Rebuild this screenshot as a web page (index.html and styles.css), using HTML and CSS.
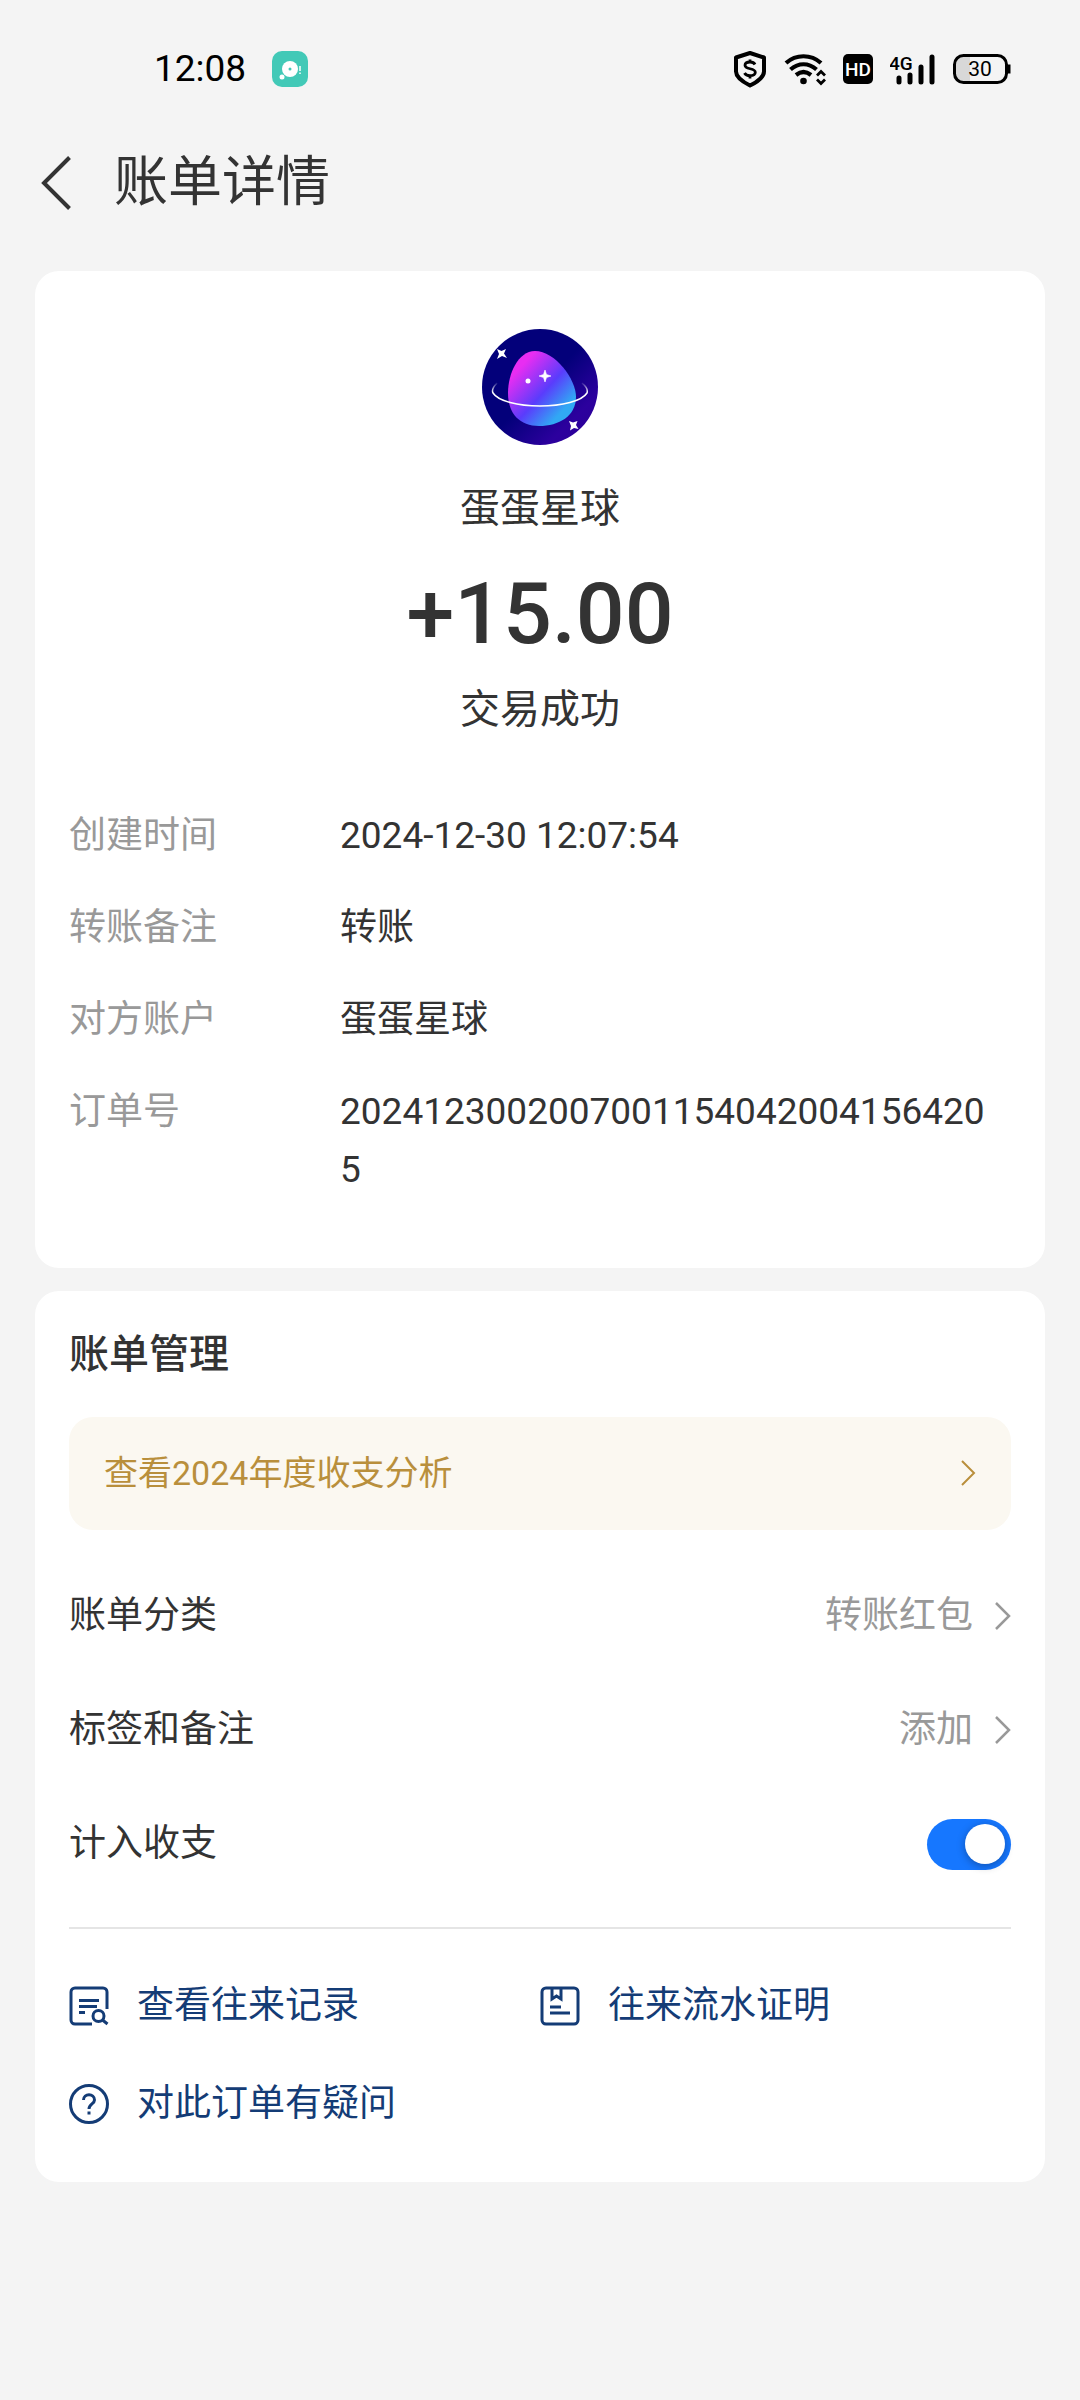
FILE: index.html
```html
<!DOCTYPE html>
<html lang="zh-CN">
<head>
    <meta charset="UTF-8">
    <meta name="viewport" content="width=device-width, initial-scale=1.0">
    <title>账单详情</title>
    <link rel="stylesheet" href="styles.css">
</head>
<body>
    <div class="status-bar">
        <span class="time">12:08</span>
        <svg class="app-badge" width="36" height="36" viewBox="0 0 36 36" aria-hidden="true">
            <rect width="36" height="36" rx="10" fill="#42c9b7"/>
            <circle cx="18" cy="18" r="8" fill="#fff"/>
            <circle cx="10" cy="26" r="2.5" fill="#fff"/>
            <circle cx="18" cy="18" r="1.5" fill="#42c9b7"/>
            <path d="M28 15v5M28 21.500v1.500" stroke="#fff" stroke-width="1.500"/>
        </svg>
        <div class="status-icons">
            <svg width="34" height="38" viewBox="0 0 34 38" aria-hidden="true">
                <path d="M17 3l14 4.500v14c0 6-6 10-14 14-8-4-14-8-14-14v-14z" fill="none" stroke="#000" stroke-width="4" stroke-linejoin="round"/>
                <path d="M22 14.500c-1-2-3-2.500-5-2.500-3 0-5 1.200-5 3.300 0 4.700 10.300 2.200 10.300 7 0 2.200-2.300 3.400-5.300 3.400-2.500 0-4.500-.8-5.500-2.700M17 9.500v3M17 25.500v3" fill="none" stroke="#000" stroke-width="2.800"/>
            </svg>
            <svg width="42" height="34" viewBox="0 0 42 34" aria-hidden="true">
                <path d="M2 11c10-9 25-9 35 0M6.500 17.500c8-7 18-7 26 0M12 23c5-4 10-4 15 0" fill="none" stroke="#000" stroke-width="4.200"/>
                <circle cx="19.500" cy="29" r="3.300"/>
                <path d="M33 23.500l4-4 4 4M33 27.500l4 4 4-4" fill="none" stroke="#000" stroke-width="2.800"/>
            </svg>
            <svg width="30" height="30" viewBox="0 0 30 30" aria-label="HD">
                <rect width="30" height="30" rx="5"/>
                <text class="hd" x="15" y="22" text-anchor="middle">HD</text>
            </svg>
            <svg width="46" height="32" viewBox="0 0 46 32" aria-label="4G">
                <text class="net" x="-1" y="17">4G</text>
                <path d="M9 25v4M20 22v7M31 14v15M42 4v25" stroke="#000" stroke-width="5" stroke-linecap="round"/>
            </svg>
            <svg width="58" height="32" viewBox="0 0 58 32" aria-label="30%">
                <path d="M10 2h7v28h-7a8 8 0 0 1-8-8V10a8 8 0 0 1 8-8z" fill="#d8d8d8"/>
                <rect x="1.500" y="2.500" width="52" height="27" rx="9" fill="none" stroke="#000" stroke-width="3"/>
                <path d="M56 11.500v9" stroke="#000" stroke-width="3"/>
                <text class="battery" x="27" y="23" text-anchor="middle">30</text>
            </svg>
        </div>
    </div>

    <header class="header">
        <button class="back" type="button" aria-label="返回">
            <svg width="32" height="54" viewBox="0 0 32 54" aria-hidden="true">
                <path d="M29.500 1.500L4 27l25.500 25.500" fill="none" stroke="#333" stroke-width="4"/>
            </svg>
        </button>
        <h1>账单详情</h1>
    </header>

    <main>
        <section class="card summary">
            <svg class="avatar" width="116" height="116" viewBox="0 0 116 116" role="img" aria-label="蛋蛋星球">
                <defs>
                    <linearGradient id="sky" x1="0" y1="0" x2="1" y2="1">
                        <stop offset=".5" stop-color="#03007a"/>
                        <stop offset=".78" stop-color="#2c009e"/>
                        <stop offset="1" stop-color="#2a0094"/>
                    </linearGradient>
                    <linearGradient id="egg" x1=".1" y1=".15" x2=".85" y2=".9">
                        <stop offset=".1" stop-color="#e82df2"/>
                        <stop offset=".55" stop-color="#5a3cfc"/>
                        <stop offset=".9" stop-color="#31a8f4"/>
                    </linearGradient>
                    <linearGradient id="ring" x1="0" y1="0" x2="0" y2="1">
                        <stop offset="0" stop-color="#fff" stop-opacity=".1"/>
                        <stop offset=".4" stop-color="#fff"/>
                    </linearGradient>
                </defs>
                <circle cx="58" cy="58" r="58" fill="url(#sky)"/>
                <path d="M53 22c20 0 41 28 41 46 0 19-17 29-37 29-19 0-31-12-31-33 0-19 10-42 27-42z" fill="url(#egg)"/>
                <path d="M15 54c-5 5-5 8-4 10 5 8 25 13 47 13s42-5 47-13c1-3 0-6-5-10" fill="none" stroke="url(#ring)" stroke-width="1.500"/>
                <circle cx="46" cy="52" r="2.500" fill="#fff"/>
                <path d="M63 41l1.500 4.500L69 47l-4.500 1.500L63 53l-1.500-4.500L57 47l4.500-1.500z" fill="#fff" stroke="#fff" stroke-width=".6"/>
                <path d="M15 20l4.500 2 4.500-2-2 4.500 3 4.500-5-2-5 3 2-5z" fill="#fff"/>
                <path d="M87 92l4 1.500 4.500-1.500-1.500 4 2.500 4-4.500-1-4 2.500 1-4.500z" fill="#fff"/>
            </svg>
            <p class="name">蛋蛋星球</p>
            <p class="amount">+15.00</p>
            <p class="state">交易成功</p>
            <dl class="details">
                <dt>创建时间</dt>
                <dd>2024-12-30 12:07:54</dd>
                <dt>转账备注</dt>
                <dd>转账</dd>
                <dt>对方账户</dt>
                <dd>蛋蛋星球</dd>
                <dt>订单号</dt>
                <dd>20241230020070011540420041564205</dd>
            </dl>
        </section>

        <section class="card manage">
            <h2>账单管理</h2>
            <a class="banner" href="#">
                <span>查看2024年度收支分析</span>
                <svg width="15" height="26" viewBox="0 0 15 26" aria-hidden="true">
                    <path d="M1 1l12 12L1 25" fill="none" stroke="currentColor" stroke-width="2"/>
                </svg>
            </a>
            <button class="row" type="button">
                <span>账单分类</span>
                <span class="value">转账红包
                    <svg width="16" height="28" viewBox="0 0 16 28" aria-hidden="true">
                        <path d="M1 1l13 13L1 27" fill="none" stroke="currentColor" stroke-width="2.500"/>
                    </svg>
                </span>
            </button>
            <button class="row" type="button">
                <span>标签和备注</span>
                <span class="value">添加
                    <svg width="16" height="28" viewBox="0 0 16 28" aria-hidden="true">
                        <path d="M1 1l13 13L1 27" fill="none" stroke="currentColor" stroke-width="2.500"/>
                    </svg>
                </span>
            </button>
            <div class="row">
                <label for="count">计入收支</label>
                <input class="switch" type="checkbox" id="count" checked>
            </div>
            <nav class="links">
                <a href="#">
                    <svg width="40" height="40" viewBox="0 0 40 40" aria-hidden="true">
                        <path d="M38 23V6a4 4 0 0 0-4-4H6a4 4 0 0 0-4 4v28a4 4 0 0 0 4 4h17M10 14.500h20M10 20.500h18M10 26.500h6"/>
                        <circle cx="29.500" cy="30" r="5.500"/>
                        <path d="M33.500 34l5 4"/>
                    </svg>
                    查看往来记录
                </a>
                <a href="#">
                    <svg width="40" height="40" viewBox="0 0 40 40" aria-hidden="true">
                        <rect x="2" y="2" width="36" height="36" rx="4"/>
                        <path d="M12 2v11l4.500-3 4.500 3V2M10 21h11M10 27h20"/>
                    </svg>
                    往来流水证明
                </a>
                <a href="#">
                    <svg width="40" height="40" viewBox="0 0 40 40" aria-hidden="true">
                        <circle cx="20" cy="20" r="18.500"/>
                        <path d="M14.500 16c0-7 11-7 11 0 0 4-5.500 4-5.500 9M20 27.500v3"/>
                    </svg>
                    对此订单有疑问
                </a>
            </nav>
        </section>
    </main>
</body>
</html>
```
FILE: styles.css
```css
* {
    box-sizing: border-box;
}

body {
    margin: 0;
    min-height: 100vh;
    background-color: #f4f4f4;
    color: #333;
    font-family: Roboto, "Noto Sans CJK SC", sans-serif;
    font-size: 37px;
    line-height: 58px;
}

h1, h2, p, dl, dd {
    margin: 0;
}

button {
    padding: 0;
    border: none;
    background: none;
    color: inherit;
    font: inherit;
    cursor: pointer;
}

a {
    text-decoration: none;
}

svg {
    display: block;
    flex: none;
}

/* Barra de estado */
.status-bar {
    display: flex;
    align-items: center;
    padding: 48px 69px 0 154px;
    line-height: 42px;
    color: #000;
}

.app-badge {
    margin-left: 26px;
}

.status-icons {
    display: flex;
    align-items: center;
    gap: 17px;
    margin-left: auto;
}

.hd {
    fill: #fff;
    font-size: 19px;
    font-weight: 500;
}

.net {
    font-size: 19px;
    font-weight: 500;
}

.battery {
    font-size: 21px;
}

.header {
    display: flex;
    align-items: center;
    gap: 42px;
    padding: 58px 40px 54px;
}

.header h1 {
    font-size: 54px;
    font-weight: 400;
    line-height: 69px;
}

main {
    display: flex;
    flex-direction: column;
    gap: 23px;
    padding: 0 35px;
}

.card {
    padding: 0 34px;
    border-radius: 24px;
    background-color: #fff;
}

.summary {
    padding-top: 58px;
    padding-bottom: 69px;
    text-align: center;
}

.avatar {
    margin: 0 auto 36px;
}

.name, .state {
    font-size: 40px;
    line-height: 56px;
}

.amount {
    margin: 28px 0 19px;
    font-size: 86px;
    font-weight: 500;
    line-height: 98px;
}

.details {
    display: grid;
    grid-template-columns: 271px 1fr;
    row-gap: 34px;
    margin-top: 69px;
    padding-right: 12px;
    text-align: left;
}

.details dt {
    color: #999;
}

.details dd {
    word-break: break-all;
}

.manage {
    padding-top: 35px;
    padding-bottom: 49px;
}

.manage h2 {
    margin-bottom: 33px;
    font-size: 40px;
    font-weight: 500;
}

.banner {
    display: flex;
    align-items: center;
    justify-content: space-between;
    margin-bottom: 29px;
    padding: 27px 35px 28px;
    border-radius: 24px;
    background-color: #fbf8f1;
    color: #b98f3c;
    font-size: 34px;
}

.row {
    display: flex;
    align-items: center;
    justify-content: space-between;
    width: 100%;
    padding: 28px 0;
}

.value {
    display: flex;
    align-items: center;
    gap: 22px;
    color: #999;
}

.switch {
    display: flex;
    align-items: center;
    justify-content: flex-end;
    appearance: none;
    width: 84px;
    height: 51px;
    margin: 0;
    padding: 0 6px;
    border-radius: 26px;
    background-color: #ccc;
    cursor: pointer;
}

.switch::before {
    content: "";
    width: 40px;
    height: 40px;
    border-radius: 50%;
    background-color: #fff;
    box-shadow: 0 2px 8px rgba(0, 0, 0, 0.3);
}

.switch:checked {
    background-color: #1677ff;
}

.switch:not(:checked) {
    justify-content: flex-start;
}

.links {
    display: grid;
    grid-template-columns: 1fr 1fr;
    row-gap: 40px;
    margin-top: 26px;
    padding-top: 48px;
    border-top: 2px solid #e5e5e5;
}

.links a {
    display: flex;
    align-items: center;
    gap: 28px;
    color: #143c76;
}

.links svg {
    fill: none;
    stroke: currentColor;
    stroke-width: 3;
}
```
